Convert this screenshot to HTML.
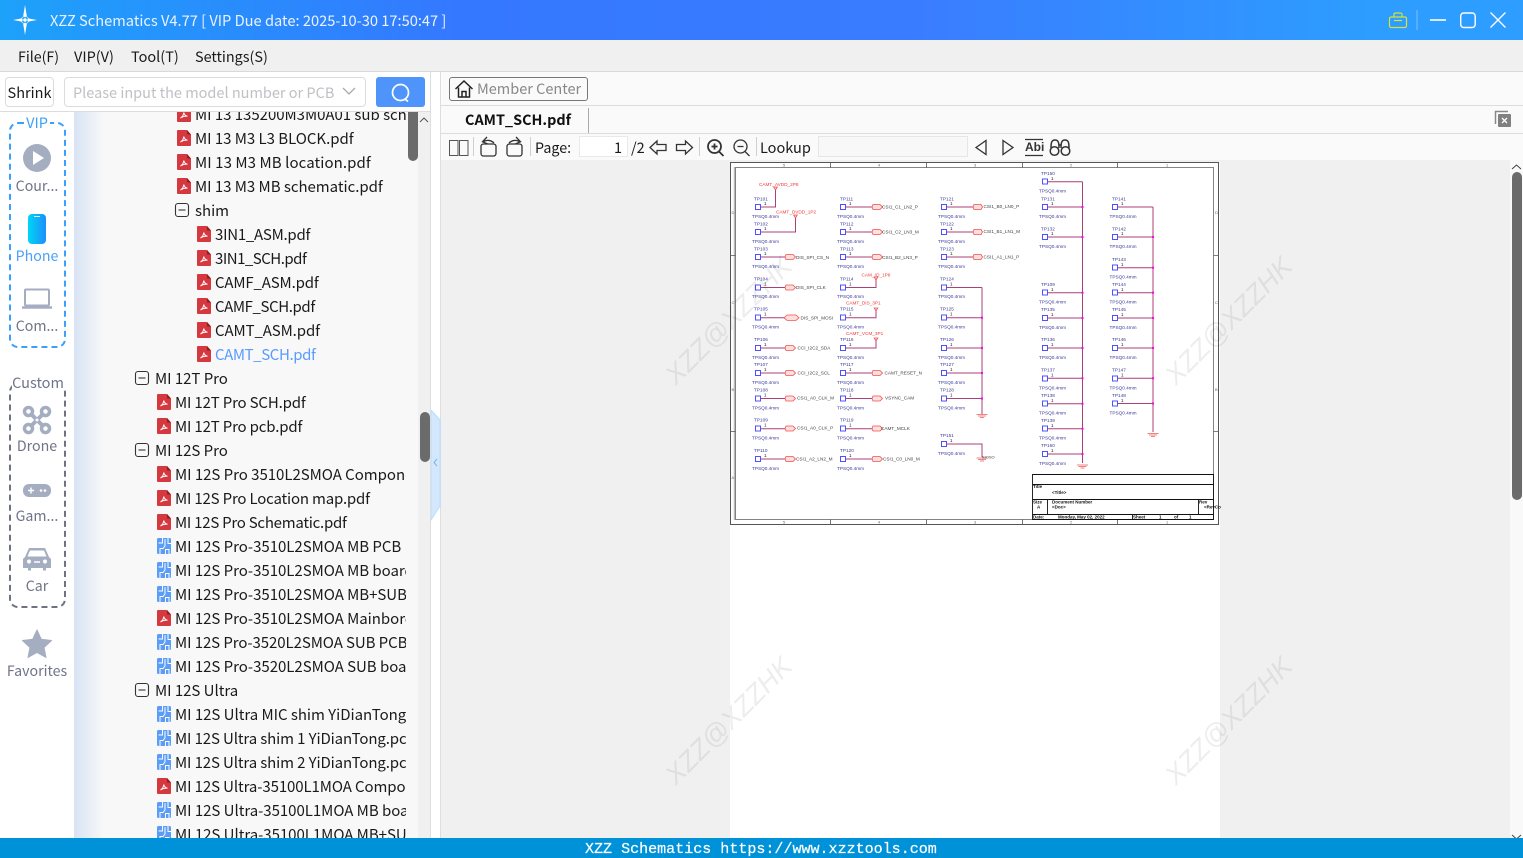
<!DOCTYPE html>
<html><head><meta charset="utf-8"><title>XZZ Schematics</title>
<style>
html,body{margin:0;padding:0;width:1523px;height:858px;overflow:hidden;background:#fff}
body{position:relative;font-family:"Noto Sans CJK SC","Liberation Sans",sans-serif;font-size:15px;color:#1a1a1a}
.a{position:absolute;white-space:nowrap}
.t{position:absolute;white-space:nowrap;line-height:20px}
.r{height:24px;line-height:24px;white-space:nowrap;position:relative}
.r svg{position:absolute;top:3px;width:14px;height:16px}
.r span{position:absolute;top:0;letter-spacing:-.03px}
.l1 svg{left:177px}.l1 span{left:195px}
.l2 svg{left:197px}.l2 span{left:215px}
.l0 svg{left:157px}.l0 span{left:175px}
.m0 svg{left:134px;width:16px}.m0 span{left:155px}
.m1 svg{left:174px;width:16px}.m1 span{left:195px}
.sl{position:absolute;left:0;width:74px;text-align:center;color:#6f7487;font-size:14.2px;line-height:20px}
.sep{position:absolute;top:137px;width:1px;height:19px;background:#cfcfcf}
.wm{position:absolute;font:italic 27px "Liberation Sans",sans-serif;color:rgba(0,0,0,.07);transform:translate(-50%,-50%) rotate(-45deg);white-space:nowrap}
</style></head><body>
<svg width="0" height="0" style="position:absolute"><defs>
<symbol id="pdf" viewBox="0 0 14 16" preserveAspectRatio="none"><path d="M1 0H10L14 4.500V15a1 1 0 0 1-1 1H1a1 1 0 0 1-1-1V1a1 1 0 0 1 1-1z" fill="#d5393f"/><path d="M10 0V4.500h4z" fill="#8e1f24"/><path d="M3.500 12c1.800-.9 3-3 3.300-5.400.6 2.200 1.800 3.300 3.700 3.600-2.400-.1-5 .5-7 1.800z" fill="none" stroke="#fff" stroke-width="1"/></symbol>
<symbol id="pcb" viewBox="0 0 14 16" preserveAspectRatio="none"><rect x="0" y="0" width="14" height="16" rx="1.500" fill="#5b9cf6"/><path d="M3 16V10.500H6L8 8V1M5.500 0V5H1.500M12 16V11.500H8.500V16M11 0V5.500H14" fill="none" stroke="#fff" stroke-width="1"/></symbol>
<symbol id="minus" viewBox="0 0 16 16"><rect x="1.500" y="1.500" width="13" height="13" rx="2.500" fill="none" stroke="#333" stroke-width="1.100"/><path d="M4.500 8h7" stroke="#333" stroke-width="1.100"/></symbol>
</defs></svg>

<!-- title bar -->
<div class="a" style="left:0;top:0;width:1523px;height:40px;background:linear-gradient(90deg,#1da2fa 0%,#3478ff 30%,#3a7cff 60%,#2d9dff 90%,#2d9dff 100%)"></div>
<svg class="a" style="left:10px;top:3px" width="32" height="34" viewBox="0 0 32 34"><path d="M15 2l1.800 11-1.800 1.500L13.200 13zM15 32l1.800-11-1.800-1.500L13.200 21zM3 17l9-1.600.8 1.600-.8 1.600zM27 17l-9-1.600-.8 1.600.8 1.600z" fill="#fff"/><path d="M15 12l5 5-5 5-5-5z" fill="none" stroke="#fff" stroke-width=".8" opacity=".7"/><circle cx="15" cy="17" r="1.800" fill="#fff"/></svg>
<div class="t" style="left:50px;top:11px;color:#e9f2ff;font-size:14.65px">XZZ Schematics V4.77 [ VIP Due date: 2025-10-30 17:50:47 ]</div>
<svg class="a" style="left:1385px;top:8px" width="125" height="24" viewBox="0 0 125 24" fill="none">
<path d="M6 9h14a1.500 1.500 0 0 1 1.500 1.500V18a1.500 1.500 0 0 1-1.500 1.500H6A1.500 1.500 0 0 1 4.500 18V10.500A1.500 1.500 0 0 1 6 9zM9 9V6.500A1.500 1.500 0 0 1 10.500 5h5A1.500 1.500 0 0 1 17 6.500V9M9 12.500h8" stroke="#d6e23a" stroke-width="1.200"/>
<path d="M32 2v20" stroke="#7fc0ff"/>
<path d="M45 12h16" stroke="#fff" stroke-width="1.600"/>
<rect x="75.700" y="5" width="14.500" height="14.500" rx="3" stroke="#fff" stroke-width="1.400"/>
<path d="M105.500 4.500l15 15M120.500 4.500l-15 15" stroke="#fff" stroke-width="1.400"/>
</svg>

<!-- menu -->
<div class="a" style="left:0;top:40px;width:1523px;height:31px;background:#f0f0f0;border-bottom:1px solid #d9d9d9"></div>
<div class="t" style="left:18px;top:47px;font-size:14.2px">File(F)</div>
<div class="t" style="left:74px;top:47px;font-size:14.500px">VIP(V)</div>
<div class="t" style="left:131px;top:47px;font-size:14.500px">Tool(T)</div>
<div class="t" style="left:195px;top:47px;font-size:14.4px">Settings(S)</div>

<!-- tree panel -->
<div class="a" style="left:74px;top:112px;width:344px;height:726px;background:linear-gradient(90deg,#d8e3f4 0,#f8f8f8 30px)"></div>
<div class="a" style="left:418px;top:112px;width:12px;height:726px;background:#f0f0f0"></div>
<div class="a" style="left:430px;top:72px;width:1px;height:766px;background:#dedede"></div>
<div class="a" style="left:440px;top:72px;width:1px;height:766px;background:#dedede"></div>
<div class="a" style="left:0;top:111px;width:430px;height:1px;background:#dcdcdc"></div>
<div class="a" id="tree" style="left:0;top:112px;width:406px;height:726px;overflow:hidden">
<div style="margin-top:-9px">
<div class="r l1"><svg><use href="#pdf"/></svg><span>MI 13 135200M3M0A01 sub schematic.pdf</span></div>
<div class="r l1"><svg><use href="#pdf"/></svg><span>MI 13 M3 L3 BLOCK.pdf</span></div>
<div class="r l1"><svg><use href="#pdf"/></svg><span style="letter-spacing:.08px">MI 13 M3 MB location.pdf</span></div>
<div class="r l1"><svg><use href="#pdf"/></svg><span>MI 13 M3 MB schematic.pdf</span></div>
<div class="r m1"><svg><use href="#minus"/></svg><span>shim</span></div>
<div class="r l2"><svg><use href="#pdf"/></svg><span style="letter-spacing:-.25px">3IN1_ASM.pdf</span></div>
<div class="r l2"><svg><use href="#pdf"/></svg><span style="letter-spacing:-.5px">3IN1_SCH.pdf</span></div>
<div class="r l2"><svg><use href="#pdf"/></svg><span style="letter-spacing:-.15px">CAMF_ASM.pdf</span></div>
<div class="r l2"><svg><use href="#pdf"/></svg><span style="letter-spacing:-.4px">CAMF_SCH.pdf</span></div>
<div class="r l2"><svg><use href="#pdf"/></svg><span style="letter-spacing:-.1px">CAMT_ASM.pdf</span></div>
<div class="r l2"><svg><use href="#pdf"/></svg><span style="color:#5a9bff;letter-spacing:-.4px">CAMT_SCH.pdf</span></div>
<div class="r m0"><svg><use href="#minus"/></svg><span>MI 12T Pro</span></div>
<div class="r l0"><svg><use href="#pdf"/></svg><span style="letter-spacing:-.17px">MI 12T Pro SCH.pdf</span></div>
<div class="r l0"><svg><use href="#pdf"/></svg><span style="letter-spacing:-.17px">MI 12T Pro pcb.pdf</span></div>
<div class="r m0"><svg><use href="#minus"/></svg><span>MI 12S Pro</span></div>
<div class="r l0"><svg><use href="#pdf"/></svg><span>MI 12S Pro 3510L2SMOA Component.pdf</span></div>
<div class="r l0"><svg><use href="#pdf"/></svg><span style="letter-spacing:-.18px">MI 12S Pro Location map.pdf</span></div>
<div class="r l0"><svg><use href="#pdf"/></svg><span style="letter-spacing:-.25px">MI 12S Pro Schematic.pdf</span></div>
<div class="r l0"><svg><use href="#pcb"/></svg><span>MI 12S Pro-3510L2SMOA MB PCB</span></div>
<div class="r l0"><svg><use href="#pcb"/></svg><span>MI 12S Pro-3510L2SMOA MB board.pcb</span></div>
<div class="r l0"><svg><use href="#pcb"/></svg><span>MI 12S Pro-3510L2SMOA MB+SUB.pcb</span></div>
<div class="r l0"><svg><use href="#pdf"/></svg><span>MI 12S Pro-3510L2SMOA Mainbord.pdf</span></div>
<div class="r l0"><svg><use href="#pcb"/></svg><span style="letter-spacing:-.08px">MI 12S Pro-3520L2SMOA SUB PCB</span></div>
<div class="r l0"><svg><use href="#pcb"/></svg><span>MI 12S Pro-3520L2SMOA SUB board.pcb</span></div>
<div class="r m0"><svg><use href="#minus"/></svg><span>MI 12S Ultra</span></div>
<div class="r l0"><svg><use href="#pcb"/></svg><span>MI 12S Ultra MIC shim YiDianTong.pcb</span></div>
<div class="r l0"><svg><use href="#pcb"/></svg><span style="letter-spacing:-.12px">MI 12S Ultra shim 1 YiDianTong.pcb</span></div>
<div class="r l0"><svg><use href="#pcb"/></svg><span style="letter-spacing:-.12px">MI 12S Ultra shim 2 YiDianTong.pcb</span></div>
<div class="r l0"><svg><use href="#pdf"/></svg><span style="letter-spacing:-.1px">MI 12S Ultra-35100L1MOA Component.pdf</span></div>
<div class="r l0"><svg><use href="#pcb"/></svg><span>MI 12S Ultra-35100L1MOA MB board.pcb</span></div>
<div class="r l0"><svg><use href="#pcb"/></svg><span>MI 12S Ultra-35100L1MOA MB+SUB.pcb</span></div>
</div></div>
<div class="a" style="left:408px;top:112px;width:10px;height:49px;background:#6b6b6b;border-radius:0 0 5px 5px"></div>
<div class="a" style="left:420px;top:412px;width:10px;height:50px;background:#6b6b6b;border-radius:5px"></div>
<svg class="a" style="left:419px;top:116px" width="10" height="8"><path d="M1 6l4-4 4 4" fill="none" stroke="#555"/></svg>
<svg class="a" style="left:431px;top:410px" width="10" height="112"><path d="M0 0l9 10v86L0 110z" fill="#d3e8fd" stroke="#b8dcff"/><path d="M6 49l-3 3.500 3 3.500" fill="none" stroke="#7eb2ea"/></svg>

<!-- search row -->
<div class="a" style="left:5px;top:77px;width:47px;height:28px;border:1px solid #dcdcdc;border-radius:4px;text-align:center;line-height:29px;font-size:14.500px;background:#fff">Shrink</div>
<div class="a" style="left:64px;top:77px;width:300px;height:28px;border:1px solid #dcdcdc;border-radius:4px;background:#fff;line-height:29px;text-indent:8px;color:#bfc1c5;font-size:14.500px">Please input the model number or PCB</div>
<svg class="a" style="left:342px;top:87px" width="14" height="9"><path d="M1 1l6 6 6-6" fill="none" stroke="#aaa" stroke-width="1.300"/></svg>
<div class="a" style="left:376px;top:77px;width:49px;height:30px;background:#4e94fb;border-radius:3px"></div>
<svg class="a" style="left:390px;top:82px" width="22" height="22" fill="none"><circle cx="10.500" cy="10.500" r="8" stroke="#fff" stroke-width="1.700"/><path d="M15 17l3 2.500" stroke="#fff" stroke-width="1.700"/></svg>

<!-- sidebar -->
<div class="a" style="left:9px;top:122px;width:53px;height:222px;border:2px dashed #3aa0fb;border-radius:9px"></div>
<div class="a" style="left:24px;top:113px;width:26px;height:20px;background:#fff;text-align:center;color:#3aa0fb;font-size:14.500px;line-height:20px">VIP</div>
<svg class="a" style="left:22px;top:143px" width="30" height="30"><circle cx="15" cy="15" r="14" fill="#a5adc0"/><path d="M11 8l11 7-11 7z" fill="#fff"/></svg>
<div class="sl" style="top:176px">Cour...</div>
<div class="a" style="left:28px;top:214px;width:18px;height:30px;border-radius:4px;background:linear-gradient(90deg,#00d6f6,#1c8ffb)"></div>
<div class="a" style="left:34px;top:216px;width:6px;height:1px;background:#d8fbff"></div>
<div class="sl" style="top:246px;color:#4a9ffb">Phone</div>
<svg class="a" style="left:22px;top:288px" width="30" height="22" fill="none"><rect x="3" y="1.500" width="24" height="16" rx="1" stroke="#a5adc0" stroke-width="2"/><path d="M0 19.500h30" stroke="#a5adc0" stroke-width="2.500"/></svg>
<div class="sl" style="top:316px">Com...</div>
<div class="a" style="left:9px;top:383px;width:53px;height:221px;border:2px dashed #6d7382;border-radius:9px"></div>
<div class="a" style="left:12px;top:373px;width:52px;height:20px;background:#fff;text-align:center;color:#6f7487;font-size:14.500px;line-height:20px">Custom</div>
<svg class="a" style="left:22px;top:405px" width="30" height="30" fill="none"><circle cx="6.500" cy="6.500" r="4" stroke="#a5adc0" stroke-width="3.500"/><circle cx="23.500" cy="6.500" r="4" stroke="#a5adc0" stroke-width="3.500"/><circle cx="6.500" cy="23.500" r="4" stroke="#a5adc0" stroke-width="3.500"/><circle cx="23.500" cy="23.500" r="4" stroke="#a5adc0" stroke-width="3.500"/><path d="M8 8l14 14M22 8L8 22" stroke="#a5adc0" stroke-width="4"/><circle cx="15" cy="15" r="1.500" fill="#fff"/></svg>
<div class="sl" style="top:436px">Drone</div>
<svg class="a" style="left:23px;top:484px" width="28" height="14"><rect width="28" height="13" rx="6" fill="#a5adc0"/><path d="M5 6.500h6M8 3.500v6" stroke="#fff" stroke-width="1.500"/><circle cx="18" cy="6.500" r="1.300" fill="#fff"/><circle cx="22" cy="6.500" r="1.300" fill="#fff"/></svg>
<div class="sl" style="top:506px">Gam...</div>
<svg class="a" style="left:23px;top:547px" width="28" height="25"><path d="M6 1h16l4 9 2 2v9h-5v2.500h-3V21H8v2.500H5V21H0v-9l2-2z" fill="#a5adc0"/><path d="M7 3.500h14l2.500 6h-19z" fill="#fff"/><circle cx="6" cy="14.500" r="2" fill="#fff"/><circle cx="22" cy="14.500" r="2" fill="#fff"/><path d="M11 15h6" stroke="#fff" stroke-width="1.500"/></svg>
<div class="sl" style="top:576px">Car</div>
<svg class="a" style="left:22px;top:629px" width="30" height="29"><path d="M15 1l4.300 9.300 10.200 1.200-7.500 7 2 10L15 23.500 6 28.500l2-10-7.500-7 10.200-1.200z" fill="#a5adc0" stroke="#a5adc0" stroke-linejoin="round"/></svg>
<div class="sl" style="top:661px">Favorites</div>

<!-- right top rows -->
<div class="a" style="left:441px;top:72px;width:1082px;height:88px;background:#fafafa"></div>
<div class="a" style="left:441px;top:105px;width:1082px;height:1px;background:#dcdcdc"></div>
<div class="a" style="left:441px;top:133px;width:1082px;height:1px;background:#dcdcdc"></div>
<div class="a" style="left:449px;top:77px;width:137px;height:22px;border:1px solid #777;border-radius:3px"></div>
<svg class="a" style="left:454px;top:79px" width="20" height="20" fill="none" stroke="#222" stroke-width="1.500"><path d="M1.500 10L10 2l8.500 8M4.500 8.500V18h11V8.500M8 18v-5.500h4V18"/></svg>
<div class="t" style="left:477px;top:79px;color:#888;font-size:14.500px">Member Center</div>
<div class="t" style="left:465px;top:110px;font-weight:700;font-size:14.4px;color:#111">CAMT_SCH.pdf</div>
<div class="a" style="left:588px;top:108px;width:1px;height:25px;background:#aaa"></div>
<svg class="a" style="left:1493px;top:109px" width="20" height="20"><path d="M2.500 15V2.500H15" fill="none" stroke="#888" stroke-width="1.500"/><rect x="5" y="5" width="13" height="13" rx="1" fill="#808080"/><path d="M9 9l5 5M14 9l-5 5" stroke="#fff" stroke-width="1.300"/></svg>

<!-- toolbar -->
<svg class="a" style="left:445px;top:135px" width="630" height="24" fill="none" stroke="#333" stroke-width="1.300">
<g stroke="#555" stroke-width="1"><rect x="4.500" y="5.500" width="8.500" height="15"/><rect x="14.500" y="5.500" width="8.500" height="15"/></g>
<rect x="36" y="9" width="15" height="12" rx="2.500"/><path d="M38 7c3.500-2.500 8-2 11 1M42 2L37.500 6.800l5 2"/>
<rect x="62" y="9" width="15" height="12" rx="2.500"/><path d="M75 7c-3.500-2.500-8-2-11 1M71 2l4.500 4.800-5 2"/>
<path d="M205 12.500l7-6.500v3.500h9v6h-9V19zM247.500 12.500l-7-6.500v3.500h-9v6h9V19z"/>
<circle cx="269.500" cy="11.500" r="6.500" stroke-width="1.800"/><path d="M274 16.500l4.500 4.500M266.500 11.500h6M269.500 8.500v6" stroke-width="1.800"/>
<circle cx="295.500" cy="11.500" r="6.500"/><path d="M300 16.500l4.500 4.500M292.500 11.500h6"/>
<path d="M531 12.500l10-7v14zM558 5.500l10 7-10 7z"/>
<path d="M580 4.500h18M580 20.500h18"/>
<path d="M606 13c0-5 .5-8 4-8s4 3 4 8M616 13c0-5 .5-8 4-8s4 3 4 8M614 10h2" stroke-width="1.500"/><circle cx="609.500" cy="16" r="4.300" stroke-width="1.500"/><circle cx="620.500" cy="16" r="4.300" stroke-width="1.500"/>
</svg>
<div class="a" style="left:1025px;top:141px;font:700 12px 'Liberation Sans',sans-serif;color:#333;line-height:13px">Abi</div>
<div class="sep" style="left:473px"></div><div class="sep" style="left:530px"></div>
<div class="sep" style="left:699px"></div><div class="sep" style="left:756px"></div>
<div class="t" style="left:535px;top:138px;font-size:14.300px">Page:</div>
<div class="a" style="left:579px;top:136px;width:49px;height:21px;background:#fff;border:0;box-shadow:inset 0 0 0 1px #e9e9e9;text-align:right;line-height:23px;font-size:14.500px"><span style="padding-right:6px">1</span></div>
<div class="t" style="left:631px;top:138px;font-size:14.500px">/2</div>
<div class="t" style="left:760px;top:138px;font-size:14.500px">Lookup</div>
<div class="a" style="left:818px;top:136px;width:150px;height:21px;box-shadow:inset 0 0 0 1px #e6e6e6;background:#f8f8f8"></div>

<!-- doc area -->
<div class="a" style="left:441px;top:160px;width:1069px;height:678px;background:#f0f0f0"></div>
<div class="a" style="left:1510px;top:160px;width:13px;height:678px;background:#f9f9f9"></div>
<svg class="a" style="left:1511px;top:164px" width="11" height="6"><path d="M1 5l4.500-4 4.500 4" fill="none" stroke="#444"/></svg>
<svg class="a" style="left:1511px;top:834px" width="11" height="5"><path d="M1 1l4.500 4 4.500-4" fill="none" stroke="#444"/></svg>
<div class="a" style="left:1512px;top:172px;width:10px;height:328px;background:#6b6b6b;border-radius:5px"></div>
<div class="a" style="left:730px;top:162px;width:490px;height:676px;background:#fff"></div>

<!-- schematic -->
<svg class="a" style="left:730px;top:162px;filter:blur(.2px)" width="492" height="366" viewBox="730 162 492 366" font-family="Liberation Sans,sans-serif" font-size="4.700">
<rect x="730.500" y="162.500" width="488" height="362" fill="none" stroke="#555" stroke-width="1"/>
<path d="M734.500 167V520" stroke="#bbb" stroke-width="1.500"/>
<rect x="735.500" y="167.500" width="478" height="352" fill="none" stroke="#666" stroke-width=".8"/>
<path d="M830.500 162.500v5M926.500 162.500v5M1022.500 162.500v5M1117.500 162.500v5M830.500 519.500v5M926.500 519.500v5M1022.500 519.500v5M1117.500 519.500v5M730.500 255.500h5M730.500 431.500h5M1213.500 255.500h5M1213.500 431.500h5" stroke="#555" stroke-width=".8"/>
<g fill="#666" font-size="4"><text x="783" y="166.500">5</text><text x="878" y="166.500">4</text><text x="974" y="166.500">3</text><text x="1070" y="166.500">2</text><text x="1166" y="166.500">1</text><text x="783" y="523.500">5</text><text x="878" y="523.500">4</text><text x="974" y="523.500">3</text><text x="1070" y="523.500">2</text><text x="1166" y="523.500">1</text><text x="731.500" y="214">D</text><text x="731.500" y="304">C</text><text x="731.500" y="391">B</text><text x="731.500" y="479">A</text><text x="1215" y="214">D</text><text x="1215" y="304">C</text><text x="1215" y="391">B</text></g>
<!-- wires -->
<g fill="none" stroke="#a8407a" stroke-width="1">
<path d="M761 207H775.500V190M761 232H795.500V218M761 257H786M761 287.500H786M761 317.700H787M761 348H786M761 373H786M761 398.500H786M761 428.700H786M761 459H786"/>
<path d="M846 207H872M846 232H872M846 257H872M846 287.500H876V280M846 317.700H876V311M846 348H876V341M846 373H872M846 398.500H872M846 428.700H872M846 459H872"/>
<path d="M947 207H973M947 232H973M947 257H973M947 287.500H982M947 317.700H982M947 348H982M947 373H982M947 398.500H982M947 444H982V457M982 287.500V414"/>
<path d="M1048 181.700H1082.500M1048 207H1082.500M1048 237H1082.500M1048 292.700H1082.500M1048 318H1082.500M1048 348H1082.500M1048 378.300H1082.500M1048 403.700H1082.500M1048 428.700H1082.500M1048 454H1082.500M1082.500 181.700V463"/>
<path d="M1118 207H1153M1118 237H1153M1118 267.700H1153M1118 292.700H1153M1118 318H1153M1118 348H1153M1118 378.300H1153M1118 403.500H1153M1153 207V432"/>
</g>
<!-- test points -->
<g fill="none" stroke="#5050ff" stroke-width="1">
<path d="M755.500 204.500h5v5h-5zM755.500 229.500h5v5h-5zM755.500 254.500h5v5h-5zM755.500 285h5v5h-5zM755.500 315h5v5h-5zM755.500 345.500h5v5h-5zM755.500 370.500h5v5h-5zM755.500 396h5v5h-5zM755.500 426h5v5h-5zM755.500 456.500h5v5h-5z"/>
<path d="M840.500 204.500h5v5h-5zM840.500 229.500h5v5h-5zM840.500 254.500h5v5h-5zM840.500 285h5v5h-5zM840.500 315h5v5h-5zM840.500 345.500h5v5h-5zM840.500 370.500h5v5h-5zM840.500 396h5v5h-5zM840.500 426h5v5h-5zM840.500 456.500h5v5h-5z"/>
<path d="M941.500 204.500h5v5h-5zM941.500 229.500h5v5h-5zM941.500 254.500h5v5h-5zM941.500 285h5v5h-5zM941.500 315h5v5h-5zM941.500 345.500h5v5h-5zM941.500 370.500h5v5h-5zM941.500 396h5v5h-5zM941.500 441.500h5v5h-5z"/>
<path d="M1042.500 179h5v5h-5zM1042.500 204.500h5v5h-5zM1042.500 234.500h5v5h-5zM1042.500 290h5v5h-5zM1042.500 315.500h5v5h-5zM1042.500 345.500h5v5h-5zM1042.500 376h5v5h-5zM1042.500 401h5v5h-5zM1042.500 426h5v5h-5zM1042.500 451.500h5v5h-5z"/>
<path d="M1112.500 204.500h5v5h-5zM1112.500 234.500h5v5h-5zM1112.500 265h5v5h-5zM1112.500 290h5v5h-5zM1112.500 315.500h5v5h-5zM1112.500 345.500h5v5h-5zM1112.500 376h5v5h-5zM1112.500 401h5v5h-5z"/>
</g>
<!-- hex ports & power -->
<g fill="#ffdede" stroke="#f05050" stroke-width=".8">
<path d="M786 254.500h7l2.500 2.500-2.500 2.500h-7l-1-2.500zM786 285h7l2.500 2.500-2.500 2.500h-7l-1-2.500zM787 315h9l3 2.700-3 2.700h-9l-3-2.700zM786 345.500h7l2.500 2.500-2.500 2.500h-7l-1-2.500zM786 370.500h7l2.500 2.500-2.500 2.500h-7l-1-2.500zM786 396h7l2.500 2.500-2.500 2.500h-7l-1-2.500zM786 426h7l2.500 2.500-2.500 2.500h-7l-1-2.500zM786 456.500h7l2.500 2.500-2.500 2.500h-7l-1-2.500z"/>
<path d="M873 204.500h7l2.500 2.500-2.500 2.500h-7l-1-2.500zM873 229.500h7l2.500 2.500-2.500 2.500h-7l-1-2.500zM873 254.500h7l2.500 2.500-2.500 2.500h-7l-1-2.500zM873 370.500h7l2.500 2.500-2.500 2.500h-7l-1-2.500zM873 396h7l2.500 2.500-2.500 2.500h-7l-1-2.500zM873 426h7l2.500 2.500-2.500 2.500h-7l-1-2.500zM873 456.500h7l2.500 2.500-2.500 2.500h-7l-1-2.500z"/>
<path d="M974 204.500h7l1.500 2.500-1.500 2.500h-7l-1-2.500zM974 229.500h7l1.500 2.500-1.500 2.500h-7l-1-2.500zM974 254.500h7l1.500 2.500-1.500 2.500h-7l-1-2.500z"/>
<path d="M775.500 190l-1.800-3h3.600zM795.500 218l-1.800-3h3.600zM876 280l-1.800-3h3.600zM876 311l-1.800-3h3.600zM876 341l-1.800-3h3.600z"/>
</g>
<!-- grounds -->
<g fill="none" stroke="#f05a5a" stroke-width=".8"><path d="M976.500 414.500h11M978 416h8M980 417.500h4M976.500 458h11M978 459.500h8M980 461h4M1077 465h11M1078.500 466.500h8M1080.500 468h4M1147.500 433.500h11M1149 435h8M1151 436.500h4"/></g>
<!-- junctions -->
<g fill="#ff00ff"><path d="M981 316.700h2v2h-2zM981 347h2v2h-2zM981 372h2v2h-2zM981 397.500h2v2h-2zM1081.500 206h2v2h-2zM1081.500 236h2v2h-2zM1081.500 291.700h2v2h-2zM1081.500 317h2v2h-2zM1081.500 347h2v2h-2zM1081.500 377.300h2v2h-2zM1081.500 402.700h2v2h-2zM1081.500 427.700h2v2h-2zM1081.500 453h2v2h-2zM1152 236h2v2h-2zM1152 266.700h2v2h-2zM1152 291.700h2v2h-2zM1152 317h2v2h-2zM1152 347h2v2h-2zM1152 377.300h2v2h-2zM1152 402.500h2v2h-2z"/></g>
<!-- pin numbers -->
<g fill="#222" font-size="4.500">
<text x="764" y="205">1</text><text x="764" y="230">1</text><text x="764" y="255">1</text><text x="764" y="285.500">1</text><text x="764" y="315.500">1</text><text x="764" y="346">1</text><text x="764" y="371">1</text><text x="764" y="396.500">1</text><text x="764" y="426.500">1</text><text x="764" y="457">1</text>
<text x="849" y="205">1</text><text x="849" y="230">1</text><text x="849" y="255">1</text><text x="849" y="285.500">1</text><text x="849" y="315.500">1</text><text x="849" y="346">1</text><text x="849" y="371">1</text><text x="849" y="396.500">1</text><text x="849" y="426.500">1</text><text x="849" y="457">1</text>
<text x="950" y="205">1</text><text x="950" y="230">1</text><text x="950" y="255">1</text><text x="950" y="285.500">1</text><text x="950" y="315.500">1</text><text x="950" y="346">1</text><text x="950" y="371">1</text><text x="950" y="396.500">1</text><text x="950" y="442">1</text>
<text x="1051" y="180">1</text><text x="1051" y="205">1</text><text x="1051" y="235">1</text><text x="1051" y="291">1</text><text x="1051" y="316">1</text><text x="1051" y="346">1</text><text x="1051" y="376.500">1</text><text x="1051" y="402">1</text><text x="1051" y="427">1</text><text x="1051" y="452">1</text>
<text x="1121" y="205">1</text><text x="1121" y="235">1</text><text x="1121" y="266">1</text><text x="1121" y="291">1</text><text x="1121" y="316">1</text><text x="1121" y="346">1</text><text x="1121" y="376.500">1</text><text x="1121" y="402">1</text>
</g>
<!-- TP names -->
<g fill="#3a3a9a">
<text x="754" y="200.500">TP101</text><text x="754" y="225.500">TP102</text><text x="754" y="250.500">TP103</text><text x="754" y="280.500">TP104</text><text x="754" y="310.500">TP105</text><text x="754" y="341">TP106</text><text x="754" y="366">TP107</text><text x="754" y="391.500">TP108</text><text x="754" y="421.500">TP109</text><text x="754" y="452">TP110</text>
<text x="840" y="200.500">TP111</text><text x="840" y="225.500">TP112</text><text x="840" y="250.500">TP113</text><text x="840" y="280.500">TP114</text><text x="840" y="310.500">TP115</text><text x="840" y="341">TP116</text><text x="840" y="366">TP117</text><text x="840" y="391.500">TP118</text><text x="840" y="421.500">TP119</text><text x="840" y="452">TP120</text>
<text x="940" y="200.500">TP121</text><text x="940" y="225.500">TP122</text><text x="940" y="250.500">TP123</text><text x="940" y="280.500">TP124</text><text x="940" y="310.500">TP125</text><text x="940" y="341">TP126</text><text x="940" y="366">TP127</text><text x="940" y="391.500">TP128</text><text x="940" y="437">TP151</text>
<text x="1041" y="175">TP150</text><text x="1041" y="200.500">TP131</text><text x="1041" y="230.500">TP132</text><text x="1041" y="286">TP109</text><text x="1041" y="311">TP135</text><text x="1041" y="341">TP136</text><text x="1041" y="371.500">TP137</text><text x="1041" y="397">TP138</text><text x="1041" y="422">TP139</text><text x="1041" y="447">TP160</text>
<text x="1112" y="200.500">TP141</text><text x="1112" y="230.500">TP142</text><text x="1112" y="261">TP143</text><text x="1112" y="286">TP144</text><text x="1112" y="311">TP145</text><text x="1112" y="341">TP146</text><text x="1112" y="371.500">TP147</text><text x="1112" y="397">TP148</text>
<text x="752" y="218">TPSQ0.4mm</text><text x="752" y="243">TPSQ0.4mm</text><text x="752" y="268">TPSQ0.4mm</text><text x="752" y="298">TPSQ0.4mm</text><text x="752" y="328.500">TPSQ0.4mm</text><text x="752" y="359">TPSQ0.4mm</text><text x="752" y="384">TPSQ0.4mm</text><text x="752" y="409.500">TPSQ0.4mm</text><text x="752" y="439.500">TPSQ0.4mm</text><text x="752" y="470">TPSQ0.4mm</text>
<text x="837" y="218">TPSQ0.4mm</text><text x="837" y="243">TPSQ0.4mm</text><text x="837" y="268">TPSQ0.4mm</text><text x="837" y="298">TPSQ0.4mm</text><text x="837" y="328.500">TPSQ0.4mm</text><text x="837" y="359">TPSQ0.4mm</text><text x="837" y="384">TPSQ0.4mm</text><text x="837" y="409.500">TPSQ0.4mm</text><text x="837" y="439.500">TPSQ0.4mm</text><text x="837" y="470">TPSQ0.4mm</text>
<text x="938" y="218">TPSQ0.4mm</text><text x="938" y="243">TPSQ0.4mm</text><text x="938" y="268">TPSQ0.4mm</text><text x="938" y="298">TPSQ0.4mm</text><text x="938" y="328.500">TPSQ0.4mm</text><text x="938" y="359">TPSQ0.4mm</text><text x="938" y="384">TPSQ0.4mm</text><text x="938" y="409.500">TPSQ0.4mm</text><text x="938" y="455">TPSQ0.4mm</text>
<text x="1039" y="192.500">TPSQ0.4mm</text><text x="1039" y="218">TPSQ0.4mm</text><text x="1039" y="248">TPSQ0.4mm</text><text x="1039" y="303.500">TPSQ0.4mm</text><text x="1039" y="329">TPSQ0.4mm</text><text x="1039" y="359">TPSQ0.4mm</text><text x="1039" y="389.500">TPSQ0.4mm</text><text x="1039" y="414.500">TPSQ0.4mm</text><text x="1039" y="439.500">TPSQ0.4mm</text><text x="1039" y="465">TPSQ0.4mm</text>
<text x="1109.500" y="218">TPSQ0.4mm</text><text x="1109.500" y="248">TPSQ0.4mm</text><text x="1109.500" y="278.500">TPSQ0.4mm</text><text x="1109.500" y="303.500">TPSQ0.4mm</text><text x="1109.500" y="329">TPSQ0.4mm</text><text x="1109.500" y="359">TPSQ0.4mm</text><text x="1109.500" y="389.500">TPSQ0.4mm</text><text x="1109.500" y="414.500">TPSQ0.4mm</text>
</g>
<!-- net labels -->
<g fill="#f03838">
<text x="759" y="186">CAMT_AVDD_2P8</text><text x="776" y="213.500">CAMT_DVDD_1P2</text><text x="861.500" y="276.500">CAM_IO_1P8</text><text x="846" y="304.500">CAMT_DIS_3P1</text><text x="846" y="335">CAMT_VCM_3P1</text>
</g>
<g fill="#444">
<text x="796" y="259">DIS_SPI_CS_N</text><text x="796" y="289">DIS_SPI_CLK</text><text x="800.500" y="319.500">DIS_SPI_MOSI</text><text x="797.500" y="349.500">CCI_I2C2_SDA</text><text x="797.500" y="374.500">CCI_I2C2_SCL</text><text x="797" y="399.500">CSI1_A0_CLK_M</text><text x="797" y="429.500">CSI1_A0_CLK_P</text><text x="796" y="460.500">CSI1_A2_LN2_M</text>
<text x="882" y="208.500">CSI1_C1_LN2_P</text><text x="882" y="233.500">CSI1_C2_LN3_M</text><text x="882" y="259">CSI1_B2_LN3_P</text><text x="884.500" y="374.500">CAMT_RESET_N</text><text x="885" y="399.500">VSYNC_CAM</text><text x="881" y="430">CAMT_MCLK</text><text x="883" y="460.500">CSI1_C0_LN0_M</text>
<text x="983.500" y="208">CSI1_B0_LN0_P</text><text x="983.500" y="233">CSI1_B1_LN1_M</text><text x="983.500" y="258.500">CSI1_A1_LN1_P</text>
<text x="982" y="458.500" font-size="4">BIOSO</text>
</g>
<!-- title block -->
<g fill="none" stroke="#111" stroke-width=".9"><path d="M1032.500 474.500H1213.500V519.500H1032.500ZM1032.500 484.500H1213.500M1032.500 499.500H1213.500M1032.500 514.500H1213.500M1047.500 499.500V514.500M1198.500 499.500V514.500M1132.500 514.500V519.500"/></g>
<g fill="#111" font-size="4.500" font-weight="700">
<text x="1033" y="488">Title</text><text x="1052" y="494">&lt;Title&gt;</text><text x="1033" y="503.500">Size</text><text x="1037" y="508.500">A</text><text x="1052" y="503.500">Document Number</text><text x="1052" y="508.500">&lt;Doc&gt;</text><text x="1199" y="503.500">Rev</text><text x="1204" y="508.500">&lt;RevCo</text><text x="1033" y="518.500">Date:</text><text x="1058" y="518.500">Monday, May 02, 2022</text><text x="1133" y="518.500">Sheet</text><text x="1159" y="518.500">1</text><text x="1174" y="518.500">of</text><text x="1189" y="518.500">1</text>
</g>
</svg>

<!-- watermarks -->
<div class="wm" style="left:729px;top:321px">XZZ@XZZHK</div>
<div class="wm" style="left:1229px;top:321px">XZZ@XZZHK</div>
<div class="wm" style="left:729px;top:721px">XZZ@XZZHK</div>
<div class="wm" style="left:1229px;top:721px">XZZ@XZZHK</div>

<!-- footer -->
<div class="a" style="left:0;top:838px;width:1523px;height:20px;background:#0092d9"></div>
<div class="a" style="left:585px;top:840px;color:#fff;font:15.04px/18px 'Liberation Mono',monospace;-webkit-text-stroke:.2px #fff">XZZ Schematics https://www.xzztools.com</div>
</body></html>
